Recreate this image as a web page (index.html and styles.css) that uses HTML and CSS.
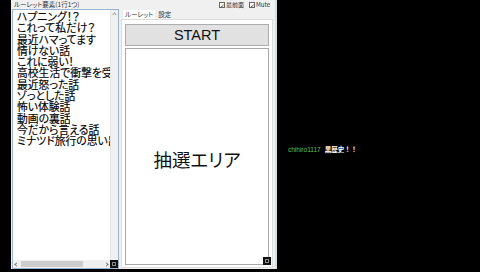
FILE: index.html
```html
<!DOCTYPE html>
<html lang="ja">
<head>
<meta charset="utf-8">
<link rel="stylesheet" href="styles.css">
</head>
<body>
<div class="screen">
  <div class="gutter"></div>
  <div class="window">
    <div class="left">
      <div class="caption">ルーレット要素(1行1つ)</div>
      <div class="textbox">
        <div class="lines">
          <div>ハプニング！？</div>
          <div>これって私だけ？</div>
          <div>最近ハマってます</div>
          <div>情けない話</div>
          <div>これに弱い！</div>
          <div>高校生活で衝撃を受けた話</div>
          <div>最近怒った話</div>
          <div>ゾっとした話</div>
          <div>怖い体験話</div>
          <div>動画の裏話</div>
          <div>今だから言える話</div>
          <div>ミナツド旅行の思い出</div>
        </div>
        <div class="vscroll"><span class="arrow-up"></span></div>
        <div class="hscroll"><span class="arrow-left"></span><span class="thumb"></span><span class="arrow-right"></span></div>
        <div class="corner"><span class="grip"></span></div>
      </div>
    </div>
    <div class="right">
      <div class="topbar">
        <label class="check"><span class="box">✓</span>最前面</label>
        <label class="check"><span class="box">✓</span>Mute</label>
      </div>
      <div class="tabs">
        <span class="tab active">ルーレット</span>
        <span class="tab">設定</span>
      </div>
      <div class="panel">
        <div class="start">START</div>
        <div class="area">
          <span class="area-text">抽選エリア</span>
          <div class="corner2"><span class="grip"></span></div>
        </div>
      </div>
    </div>
    <div class="edge"></div>
  </div>
  <div class="chat">
    <span class="name">chihiro1117</span><span class="msg">黒歴史！！</span>
  </div>
</div>
</body>
</html>
```

FILE: styles.css
```css
* { box-sizing: border-box; }
html, body { margin: 0; padding: 0; background: #000; }
body { width: 480px; height: 272px; overflow: hidden; font-family: "Noto Sans CJK JP", "Liberation Sans", sans-serif; }

.screen { display: flex; width: 480px; height: 272px; background: #000; }
.gutter { width: 11px; flex: none; }

.window {
  width: 266px; height: 269px; flex: none;
  background: #f0f0f0;
  display: flex;
}

.left { width: 108px; flex: none; display: flex; flex-direction: column; padding-left: 1px; }
.caption {
  height: 9px; font-size: 6.5px; line-height: 9px; color: #333;
  padding-left: 2px; white-space: nowrap; font-feature-settings: "palt";
}
.textbox {
  flex: 1; background: #fff; border: 1px solid #9bb4d2;
  display: grid; grid-template-columns: 1fr 8px; grid-template-rows: 1fr 8px;
  overflow: hidden;
}
.lines {
  padding: 1px 0 0 4px; font-size: 10.8px; line-height: 11.3px; color: #000;
  white-space: nowrap; overflow: hidden; font-feature-settings: "palt";
  -webkit-text-stroke: 0.15px #000;
}
.lines div { height: 11.3px; }
.vscroll { background: #f0f0f0; border-left: 1px solid #e6e6e6; position: relative; }
.arrow-up {
  position: absolute; left: 2px; top: 3px; width: 3px; height: 3px;
  border-left: 1px solid #a0a0a0; border-top: 1px solid #a0a0a0; transform: rotate(45deg);
}
.hscroll { background: #f0f0f0; display: flex; align-items: center; padding: 0 2px; gap: 3px; }
.arrow-left, .arrow-right { width: 3px; height: 3px; border-left: 1px solid #777; border-bottom: 1px solid #777; flex: none; }
.arrow-left { transform: rotate(45deg); }
.arrow-right { transform: rotate(-135deg); margin-left: auto; }
.thumb { width: 62px; height: 6px; background: #cdcdcd; flex: none; }
.corner { background: #111; display: flex; align-items: center; justify-content: center; }
.grip { width: 4px; height: 4px; border: 1px solid #888; }

.right { flex: 1; display: flex; flex-direction: column; padding-left: 2px; }
.topbar { height: 9px; display: flex; justify-content: flex-end; align-items: center; gap: 5px; padding-right: 5px; }
.check { display: flex; align-items: center; gap: 1px; font-size: 6px; color: #333; line-height: 7px; font-feature-settings: "palt"; }
.box {
  width: 6px; height: 6px; border: 1px solid #666; background: #fff;
  font-size: 6px; line-height: 5px; text-align: center; color: #333; display: inline-block;
  font-family: "DejaVu Sans", sans-serif; overflow: hidden;
}
.tabs { height: 10px; display: flex; align-items: flex-end; padding-left: 2px; gap: 2px; }
.tab { font-size: 6.5px; line-height: 9px; color: #333; padding: 0 1px; font-feature-settings: "palt"; white-space: nowrap; }
.tab.active { background: #fff; padding: 0 2px; }
.panel {
  flex: 1; background: #fff; border: 1px solid #dcdcdc; margin-bottom: 1px; margin-right: 2px;
  display: flex; flex-direction: column; gap: 2px; padding: 4px 3px 2px 3px;
}
.start {
  height: 22px; flex: none; background: #e1e1e1; border: 1px solid #adadad;
  font-family: "Liberation Sans", sans-serif; font-size: 14.5px; line-height: 20px;
  text-align: center; color: #111;
}
.area {
  flex: 1; border: 1px solid #a9a9a9; background: #fff;
  display: flex; align-items: center; justify-content: center; position: relative;
}
.area-text { font-size: 18.5px; color: #111; font-feature-settings: "palt"; margin-top: 4px; }
.corner2 {
  position: absolute; right: -3px; bottom: -1px; width: 8px; height: 8px;
  background: #111; display: flex; align-items: center; justify-content: center;
}

.edge { width: 2px; flex: none; background: #cfe3e6; }

.chat { padding: 145px 0 0 11px; font-size: 6.5px; line-height: 9px; white-space: nowrap; }
.name { color: #5cc05c; font-family: "Liberation Sans", sans-serif; margin-right: 4px; }
.msg { color: #fff; font-weight: bold; }
```
